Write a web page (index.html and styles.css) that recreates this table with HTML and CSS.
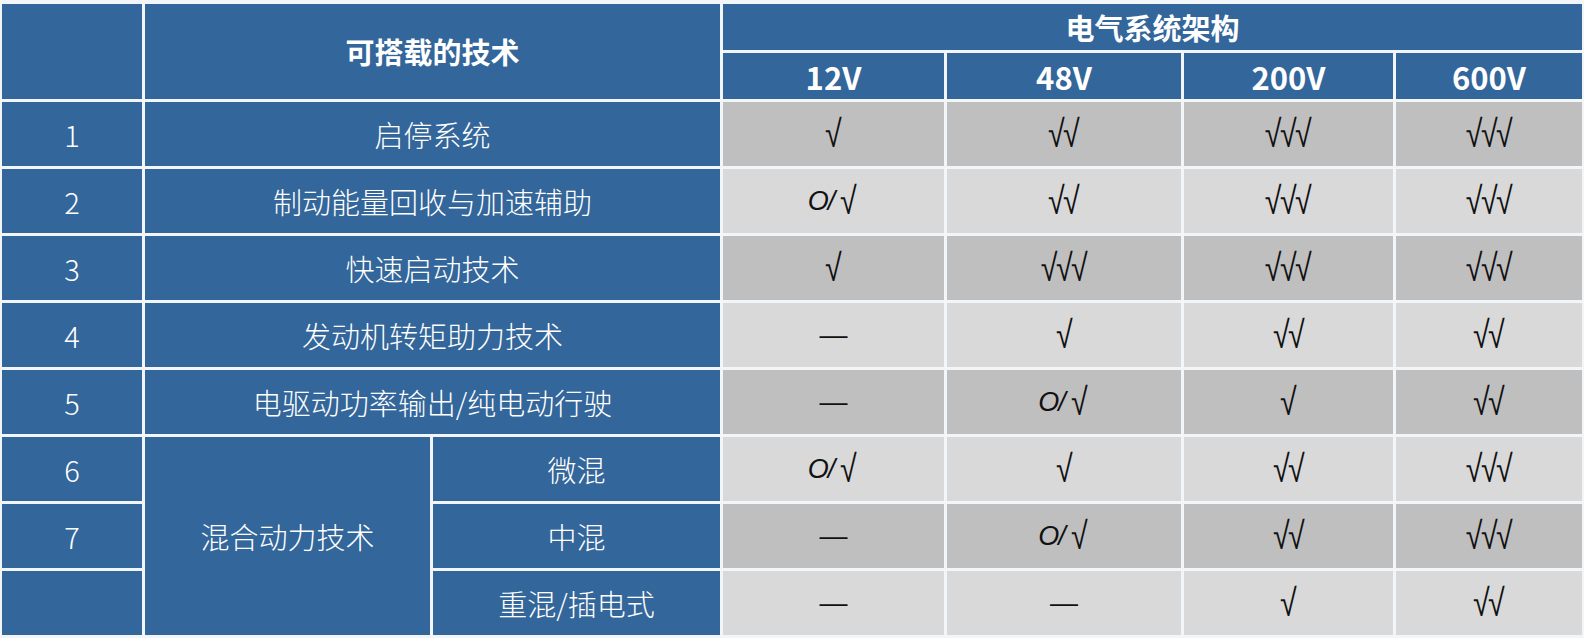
FILE: index.html
```html
<!DOCTYPE html>
<html lang="zh">
<head>
<meta charset="utf-8">
<title>电气系统架构</title>
<link rel="stylesheet" href="styles.css">
</head>
<body>
<div class="table">
  <div class="cell blue hd" style="grid-column:1;grid-row:1 / 3"></div>
  <div class="cell blue hd" style="grid-column:2 / 4;grid-row:1 / 3">可搭载的技术</div>
  <div class="cell blue hd" style="grid-column:4 / 8;grid-row:1">电气系统架构</div>
  <div class="cell blue hd volt">12V</div>
  <div class="cell blue hd volt">48V</div>
  <div class="cell blue hd volt">200V</div>
  <div class="cell blue hd volt">600V</div>

  <div class="cell blue num">1</div>
  <div class="cell blue wide">启停系统</div>
  <div class="cell dark mk"><span class="ck">√</span></div><div class="cell dark mk"><span class="ck">√√</span></div><div class="cell dark mk"><span class="ck">√√√</span></div><div class="cell dark mk"><span class="ck">√√√</span></div>

  <div class="cell blue num">2</div>
  <div class="cell blue wide">制动能量回收与加速辅助</div>
  <div class="cell light mk"><span class="o">O/</span><span class="ck">√</span></div><div class="cell light mk"><span class="ck">√√</span></div><div class="cell light mk"><span class="ck">√√√</span></div><div class="cell light mk"><span class="ck">√√√</span></div>

  <div class="cell blue num">3</div>
  <div class="cell blue wide">快速启动技术</div>
  <div class="cell dark mk"><span class="ck">√</span></div><div class="cell dark mk"><span class="ck">√√√</span></div><div class="cell dark mk"><span class="ck">√√√</span></div><div class="cell dark mk"><span class="ck">√√√</span></div>

  <div class="cell blue num">4</div>
  <div class="cell blue wide">发动机转矩助力技术</div>
  <div class="cell light mk"><span class="dash">—</span></div><div class="cell light mk"><span class="ck">√</span></div><div class="cell light mk"><span class="ck">√√</span></div><div class="cell light mk"><span class="ck">√√</span></div>

  <div class="cell blue num">5</div>
  <div class="cell blue wide">电驱动功率输出/纯电动行驶</div>
  <div class="cell dark mk"><span class="dash">—</span></div><div class="cell dark mk"><span class="o">O/</span><span class="ck">√</span></div><div class="cell dark mk"><span class="ck">√</span></div><div class="cell dark mk"><span class="ck">√√</span></div>

  <div class="cell blue num">6</div>
  <div class="cell blue hybrid">混合动力技术</div>
  <div class="cell blue">微混</div>
  <div class="cell light mk"><span class="o">O/</span><span class="ck">√</span></div><div class="cell light mk"><span class="ck">√</span></div><div class="cell light mk"><span class="ck">√√</span></div><div class="cell light mk"><span class="ck">√√√</span></div>

  <div class="cell blue num">7</div>
  <div class="cell blue">中混</div>
  <div class="cell dark mk"><span class="dash">—</span></div><div class="cell dark mk"><span class="o">O/</span><span class="ck">√</span></div><div class="cell dark mk"><span class="ck">√√</span></div><div class="cell dark mk"><span class="ck">√√√</span></div>

  <div class="cell blue num"></div>
  <div class="cell blue">重混/插电式</div>
  <div class="cell light mk"><span class="dash">—</span></div><div class="cell light mk"><span class="dash">—</span></div><div class="cell light mk"><span class="ck">√</span></div><div class="cell light mk"><span class="ck">√√</span></div>
</div>
</body>
</html>
```

FILE: styles.css
```css
html, body {
  margin: 0;
  padding: 0;
  background: #ffffff;
}

.table {
  display: grid;
  grid-template-columns: 140px 285px 287px 221px 234px 209px 186px;
  grid-template-rows: 46px 46px repeat(8, 64px);
  gap: 3px;
  padding: 4px 2px 3px 2px;
  width: 1580px;
  background: #f3f6f9;
  font-family: "Noto Sans CJK SC", "Noto Sans", sans-serif;
}

.cell {
  display: flex;
  align-items: center;
  justify-content: center;
  font-size: 29px;
  line-height: 1;
}

.blue {
  background: #33669a;
  color: #ffffff;
  font-weight: 300;
}

.hd {
  font-weight: 700;
}

.volt {
  grid-row: 2;
  font-size: 31px;
}

.wide {
  grid-column: 2 / 4;
}

.hybrid {
  grid-column: 2;
  grid-row: 8 / 11;
}

.num {
  grid-column: 1;
}

.dark {
  background: #c0bfc0;
}

.light {
  background: #d9d9da;
}

.mk {
  color: #111111;
  font-family: "Liberation Sans", sans-serif;
}

.ck {
  display: inline-block;
  font-size: 38px;
  font-style: italic;
  letter-spacing: -2px;
  padding-right: 2px;
  transform: scaleX(0.8);
}

.o {
  display: inline-block;
  font-size: 27px;
  font-style: italic;
  letter-spacing: -1px;
  margin-right: 4px;
}

.dash {
  font-size: 28px;
  color: #111111;
}
```
